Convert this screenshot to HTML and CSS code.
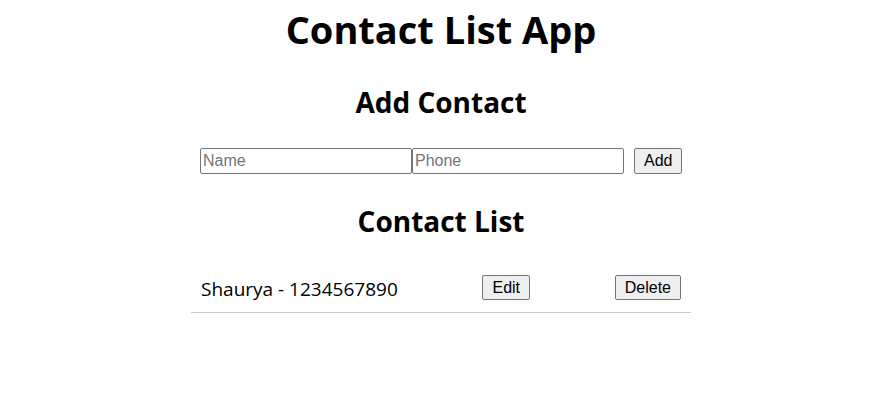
FILE: index.html
```html
<!DOCTYPE html>
<html>
<head>
<meta charset="utf-8">
<link rel="stylesheet" href="styles.css">
</head>
<body>
<div class="app">
  <h1 class="title">Contact List App</h1>
  <h2 class="section-title add-title">Add Contact</h2>
  <form class="add-form">
    <input class="field" type="text" placeholder="Name">
    <input class="field" type="text" placeholder="Phone">
    <button class="btn add-btn" type="button">Add</button>
  </form>
  <h2 class="section-title list-title">Contact List</h2>
  <ul class="contacts">
    <li class="contact">
      <span class="contact-text">Shaurya - 1234567890</span>
      <button class="btn" type="button">Edit</button>
      <button class="btn" type="button">Delete</button>
    </li>
  </ul>
</div>
</body>
</html>
```
FILE: styles.css
```css
html, body {
  margin: 0;
  padding: 0;
  background: #fff;
}
body {
  font-family: "Open Sans", "Noto Sans", sans-serif;
  color: #000;
}
.app {
  width: 500px;
  margin: 0 0 0 calc(50% - 251px);
  text-align: center;
}
.title {
  margin: 4px 0 0;
  font-size: 38px;
  font-weight: 700;
  line-height: 50px;
}
.section-title {
  font-size: 28px;
  font-weight: 700;
  line-height: 36px;
  margin: 0;
}
.add-title {
  margin-top: 30px;
}
.add-form {
  display: flex;
  padding: 0 9px 0 9px;
  margin-top: 28px;
  align-items: stretch;
}
.field {
  width: 212px;
  box-sizing: border-box;
  height: 26px;
  font-family: "Liberation Sans", Arial, sans-serif;
  font-size: 16px;
  padding: 1px 2px;
  border: 1px solid #767676;
  border-radius: 2px;
  margin: 0;
}
.field::placeholder {
  color: #757575;
}
.btn {
  font-family: "Liberation Sans", Arial, sans-serif;
  font-size: 16px;
  background: #efefef;
  border: 1px solid #767676;
  border-radius: 2px;
  padding: 1px 9px;
  color: #000;
  margin: 0;
  height: 25px;
}
.add-btn {
  margin-left: 10px;
  height: 26px;
}
.list-title {
  margin-top: 29px;
}
.contacts {
  list-style: none;
  margin: 24px 0 0;
  padding: 0;
}
.contact {
  display: flex;
  justify-content: space-between;
  align-items: center;
  padding: 10px 10px 10px;
  border-bottom: 1px solid #ccc;
  text-align: left;
}
.contact-text {
  font-size: 19px;
  line-height: 26px;
  padding-top: 3px;
}
```
